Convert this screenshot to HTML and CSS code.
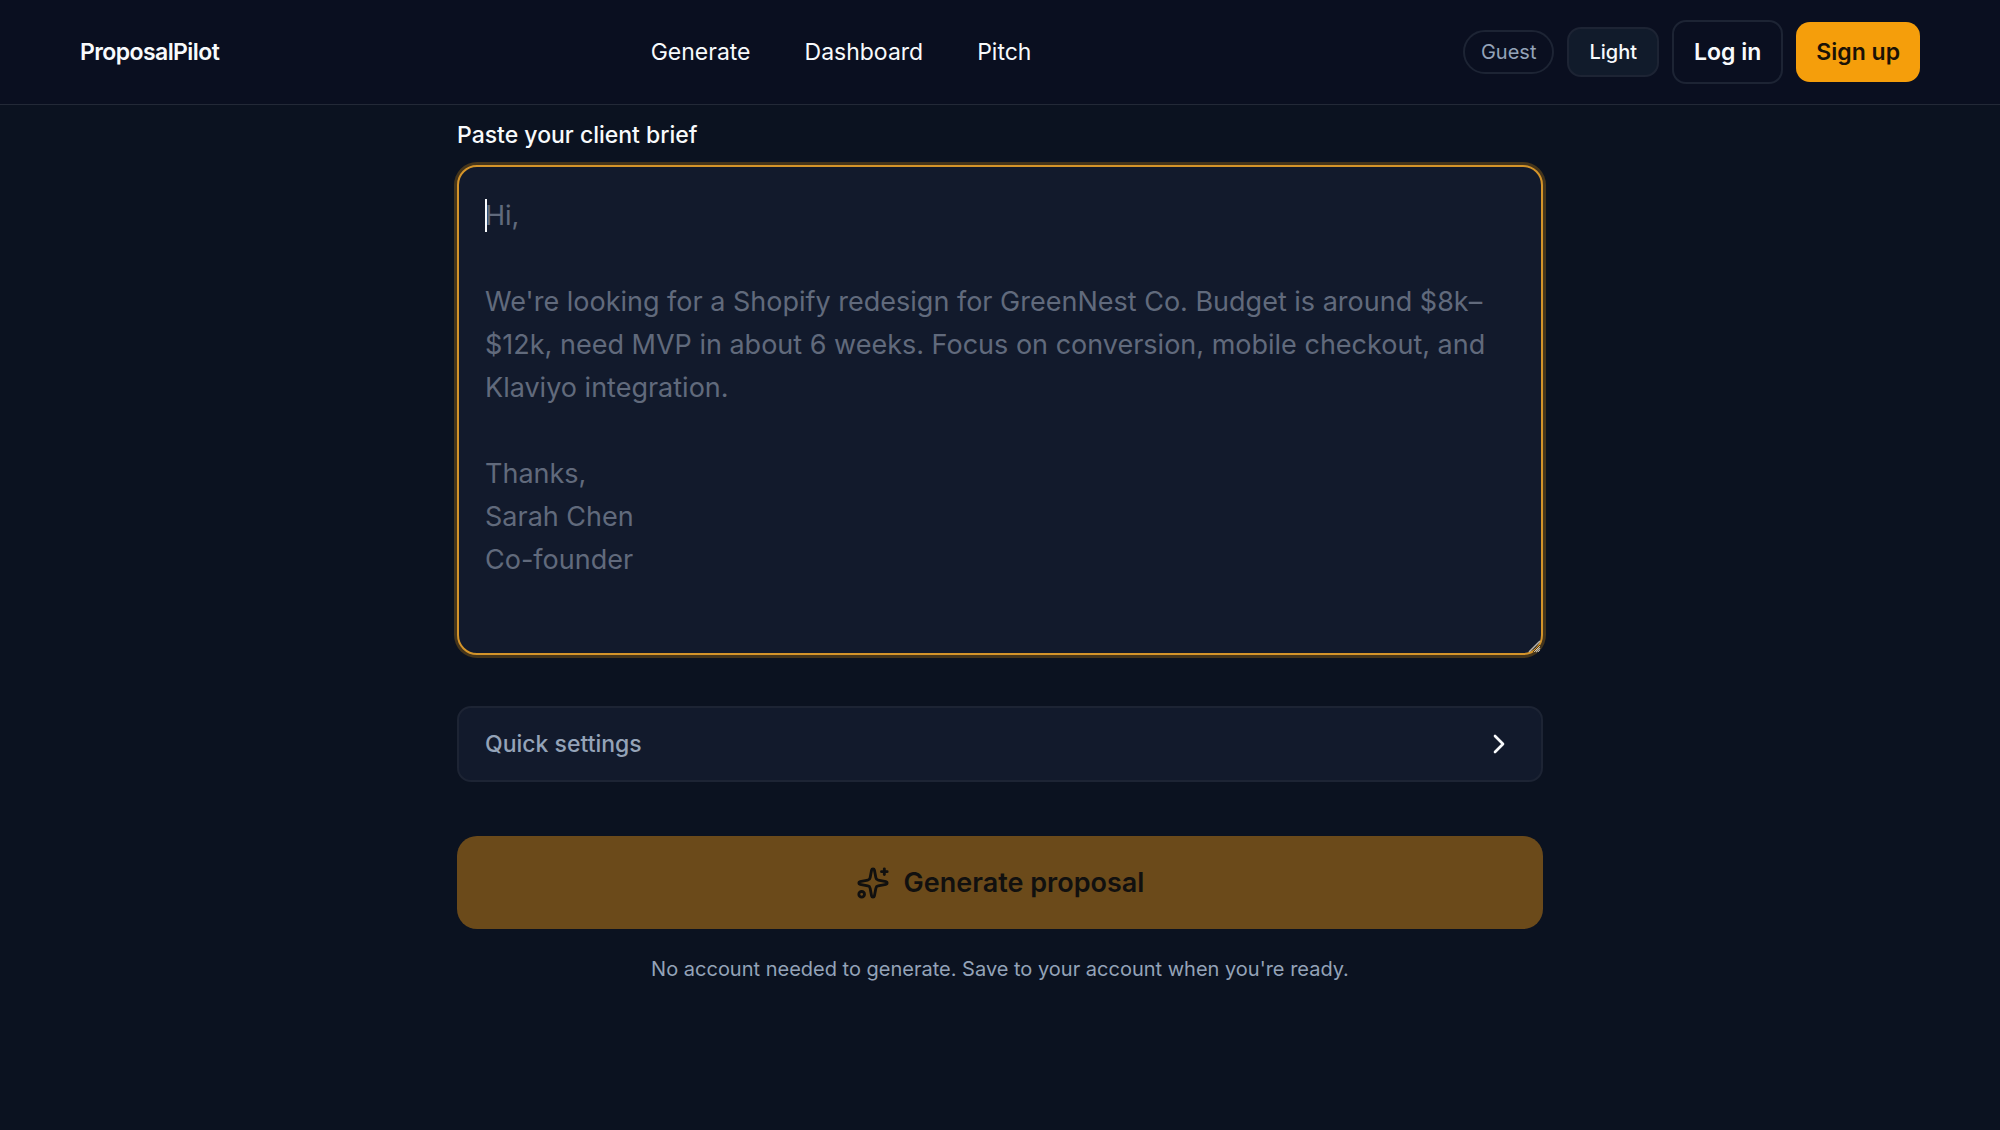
FILE: index.html
```
<!DOCTYPE html>
<html lang="en">
<head>
<meta charset="UTF-8" />
<meta name="viewport" content="width=device-width, initial-scale=1" />
<title>ProposalPilot</title>
<link rel="stylesheet" href="styles.css">
</head>
<body>

<header class="site-header">
  <a href="#" class="logo">ProposalPilot</a>

  <nav class="main-nav">
    <a href="#generate">Generate</a>
    <a href="#dashboard">Dashboard</a>
    <a href="#pitch">Pitch</a>
  </nav>

  <div class="header-actions">
    <span class="guest-badge">Guest</span>
    <button type="button" class="btn theme-toggle">Light</button>
    <a href="#login" class="btn btn-outline">Log in</a>
    <a href="#signup" class="btn btn-primary">Sign up</a>
  </div>
</header>

<main class="content">
  <form class="brief-form" id="generate">
    <label for="brief">Paste your client brief</label>
    <div class="brief-field">
      <textarea id="brief" class="brief-input" autofocus spellcheck="false" placeholder="Hi,

We're looking for a Shopify redesign for GreenNest Co. Budget is around $8k–$12k, need MVP in about 6 weeks. Focus on conversion, mobile checkout, and Klaviyo integration.

Thanks,
Sarah Chen
Co-founder"></textarea>
      <span class="caret" aria-hidden="true"></span>
      <svg class="grip" viewBox="0 0 14 14" aria-hidden="true">
        <path d="M1 12L12 1M8 12l4-4" />
      </svg>
    </div>

    <button type="button" class="quick-settings" aria-expanded="false">
      Quick settings
      <svg class="chevron" viewBox="0 0 24 24" aria-hidden="true">
        <path d="M9 18l6-6-6-6" />
      </svg>
    </button>

    <button type="submit" class="generate-btn" disabled>
      <svg class="sparkles" viewBox="0 0 24 24" aria-hidden="true">
        <path d="M11.017 2.814a1 1 0 0 1 1.966 0l1.051 5.558a2 2 0 0 0 1.594 1.594l5.558 1.051a1 1 0 0 1 0 1.966l-5.558 1.051a2 2 0 0 0-1.594 1.594l-1.051 5.558a1 1 0 0 1-1.966 0l-1.051-5.558a2 2 0 0 0-1.594-1.594l-5.558-1.051a1 1 0 0 1 0-1.966l5.558-1.051a2 2 0 0 0 1.594-1.594z" />
        <path d="M20 2v4" />
        <path d="M22 4h-4" />
        <circle cx="4" cy="20" r="2" />
      </svg>
      Generate proposal
    </button>

    <p class="form-note">No account needed to generate. Save to your account when you're ready.</p>
  </form>
</main>

</body>
</html>
```
FILE: styles.css
```
/* Reset & base */
* {
  box-sizing: border-box;
}

:root {
  --bg: #0b1220;
  --header-bg: #0a0f20;
  --surface: #121a2c;
  --border: #1d2434;
  --text: #f8fafc;
  --muted: #94a3b8;
  --amber: #f59e0b;
}

body {
  margin: 0;
  min-height: 100vh;
  background: var(--bg);
  color: var(--text);
  font-family: Inter, 'Liberation Sans', sans-serif;
  font-size: 23px;
}

a {
  color: inherit;
  text-decoration: none;
}

button,
textarea {
  font-family: inherit;
}

/* Header */
.site-header {
  display: flex;
  justify-content: space-between;
  align-items: center;
  padding: 20px 80px;
  background: var(--header-bg);
  border-bottom: 1px solid #232937;
}

.logo {
  font-weight: 600;
  letter-spacing: -0.025em;
}

.main-nav {
  display: flex;
  gap: 54px;
}

.header-actions {
  display: flex;
  align-items: center;
  gap: 13px;
}

.guest-badge {
  padding: 6px 16px;
  border: 2px solid var(--border);
  border-radius: 999px;
  color: var(--muted);
  font-size: 20px;
  line-height: 28px;
}

.btn {
  padding: 13px 20px;
  border: 2px solid var(--border);
  border-radius: 14px;
  color: var(--text);
  line-height: 34px;
  font-weight: 600;
}

.theme-toggle {
  padding: 9px 20px;
  background: #111b2b;
  font-size: 20px;
  line-height: 28px;
  font-weight: 500;
}

.btn-primary {
  padding: 13px 20px;
  border: none;
  background: var(--amber);
  color: #1a1206;
}

/* Brief form */
.content {
  padding: 14px 24px 120px;
}

.brief-form {
  display: flex;
  flex-direction: column;
  max-width: 1086px;
  margin: 0 auto;
}

.brief-form label {
  margin-bottom: 14px;
  font-weight: 500;
  line-height: 32px;
}

.brief-field {
  position: relative;
}

.brief-input {
  display: block;
  width: 100%;
  height: 490px;
  padding: 27px 26px;
  border: 2px solid #d4942a;
  border-radius: 20px;
  outline: none;
  background: var(--surface);
  box-shadow: 0 0 0 3px rgba(245, 158, 11, 0.25);
  color: var(--text);
  caret-color: transparent;
  font-size: 27px;
  line-height: 43px;
  resize: vertical;
}

.brief-input::placeholder {
  color: #616a7c;
}

/* Text cursor and resize grip drawn over the field */
.caret {
  position: absolute;
  top: 34px;
  left: 28px;
  width: 2px;
  height: 33px;
  background: var(--text);
  pointer-events: none;
}

.grip {
  position: absolute;
  right: 1px;
  bottom: 1px;
  width: 14px;
  height: 14px;
  fill: none;
  stroke: #b9b4a8;
  stroke-width: 1.5;
  pointer-events: none;
}

.quick-settings {
  display: flex;
  justify-content: space-between;
  align-items: center;
  margin-top: 51px;
  padding: 20px 26px;
  border: 2px solid var(--border);
  border-radius: 14px;
  background: var(--surface);
  color: var(--muted);
  font-size: 23px;
  font-weight: 500;
  line-height: 32px;
}

.chevron {
  width: 32px;
  height: 32px;
  fill: none;
  stroke: var(--text);
  stroke-width: 2;
  stroke-linecap: round;
  stroke-linejoin: round;
}

.generate-btn {
  display: flex;
  justify-content: center;
  align-items: center;
  gap: 14px;
  margin-top: 54px;
  padding: 26px;
  border: none;
  border-radius: 20px;
  background: #6b4a1a;
  color: #11100f;
  font-size: 27px;
  font-weight: 600;
  line-height: 41px;
}

.sparkles {
  width: 34px;
  height: 34px;
  fill: none;
  stroke: currentColor;
  stroke-width: 2;
  stroke-linecap: round;
  stroke-linejoin: round;
}

.form-note {
  margin: 26px 0 0;
  color: var(--muted);
  font-size: 20px;
  line-height: 28px;
  text-align: center;
}
```
